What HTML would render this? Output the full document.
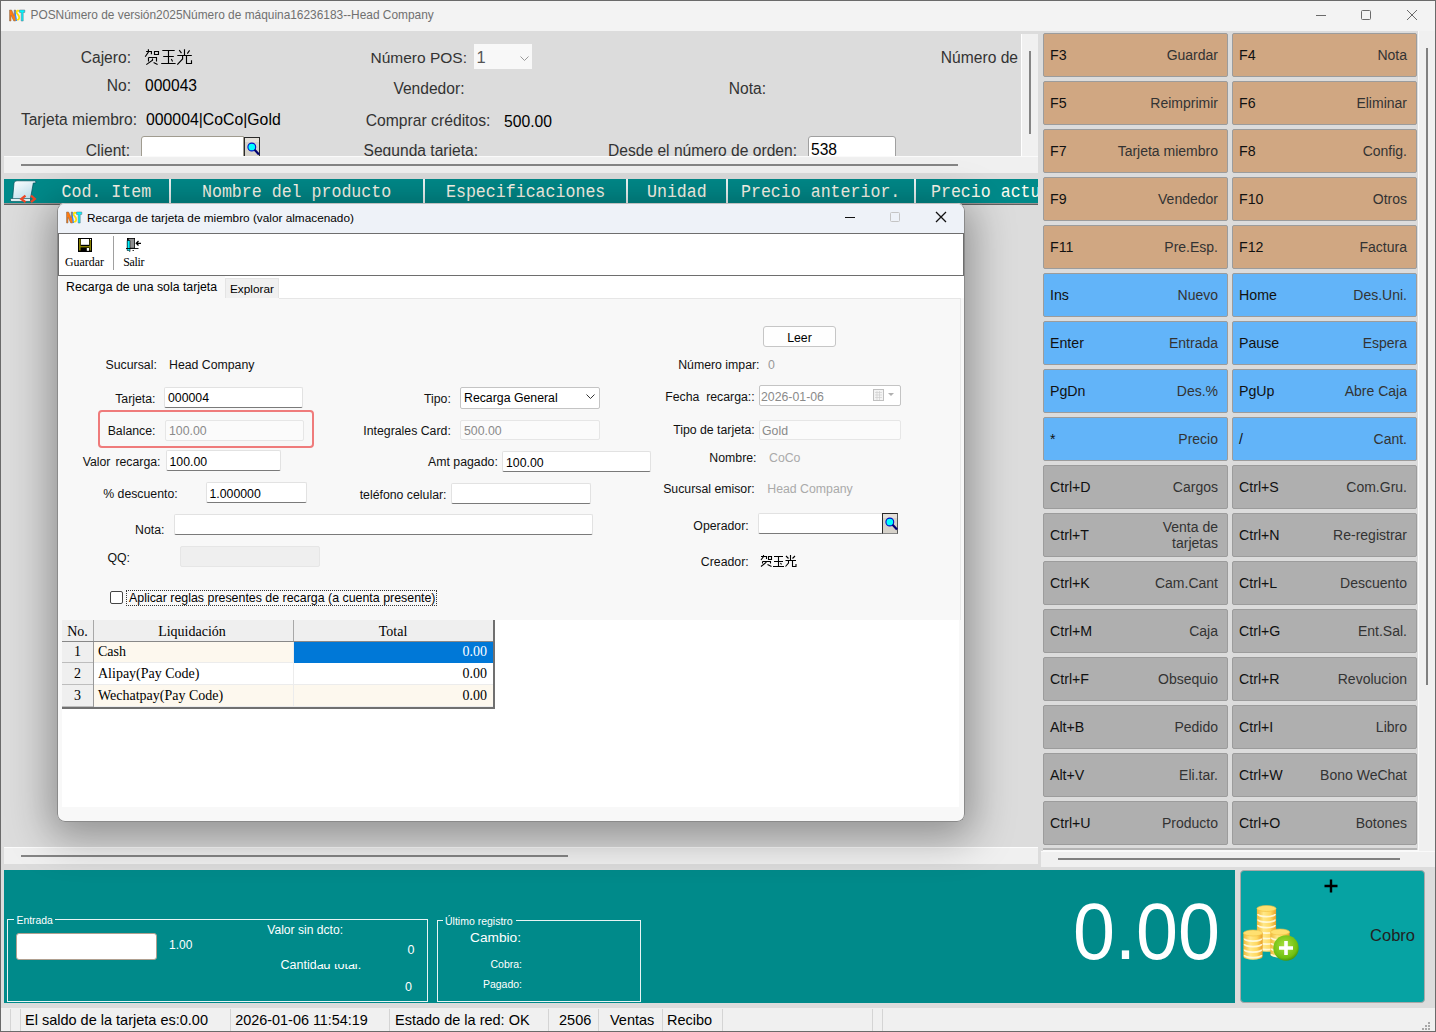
<!DOCTYPE html><html><head><meta charset="utf-8"><title>POS</title><style>
*{margin:0;padding:0;box-sizing:border-box}
html,body{width:1436px;height:1032px;overflow:hidden;background:#dcdcdc;font-family:"Liberation Sans",sans-serif}
.a{position:absolute}
.t{position:absolute;white-space:pre;line-height:1}
svg{position:absolute;overflow:visible}
</style></head><body><div class="a" style="left:0px;top:0px;width:1436px;height:31px;background:#f3f3f3"></div>
<svg style="left:9px;top:9px" width="16" height="13" viewBox="0 0 16 13"><path d="M0.5 12V1H2.6L5.2 6.5V1H6.6V12H4.7L2 6.2V12Z" fill="#ff7a10" stroke="#7a6a5a" stroke-width=".5"/><path d="M6.3 1.5C5.5 4 7 8 7.6 12" stroke="#2a88ff" stroke-width="1.2" fill="none"/><path d="M10.2 2.5C9.5 1.2 7.6 1.4 7.6 3.2C7.6 5.2 10.2 5.8 10.2 8.5C10.2 10.6 8.6 11 8 10.2" stroke="#ffe000" stroke-width="1.8" fill="none"/><path d="M10.5 1H15.8V3.4H14.2V12H12.2V3.4H10.5Z" fill="#00f8ff" stroke="#5a6a7a" stroke-width=".5"/></svg>
<div class="t" style="left:30.5px;top:10.43px;font-size:11.9px;color:#707070;font-family:'Liberation Sans', sans-serif;">POSNúmero de versión2025Número de máquina16236183--Head Company</div>
<div class="a" style="left:1316px;top:15px;width:10px;height:1px;background:#6a6a6a"></div>
<div class="a" style="left:1361px;top:10px;width:10px;height:10px;border:1px solid #6a6a6a;border-radius:1.5px"></div>
<svg style="left:1407px;top:10px" width="10" height="10"><path d="M0 0L10 10M10 0L0 10" stroke="#6a6a6a" stroke-width="1"/></svg>
<div class="t" style="right:1305px;top:49.80px;font-size:15.6px;color:#333;font-family:'Liberation Sans', sans-serif;">Cajero:</div>
<svg style="left:144px;top:48px" width="49" height="18" viewBox="0 0 49 18"><path d="M2.1 3.5H7.4V6.3M4.4 1.2V4L1.2 8.7M10.5 3.5H14.5V6.5H10.5ZM4.5 9.5V13.4M4.5 9.5H12.5V13.4M8.5 10.4V12.3L2.3 16.6M9.6 14.5L13.6 16.5M18.3 2.5H30.7M19.2 8.5H29.8M17.2 15.5H31.6M24.5 2.5V15.5M27.3 11L28.6 13.4M40.5 1.2V7.2M35.2 2.1L37.5 5.2M45.6 2.3L43.3 5.6M33.3 7.5H47.8M38.6 7.5V11L33.3 16.6M42.5 7.6V15.5H47.5V12.3" stroke="#000" stroke-width="1.15" fill="none"/></svg>
<div class="t" style="right:1305px;top:78.30px;font-size:15.6px;color:#333;font-family:'Liberation Sans', sans-serif;">No:</div>
<div class="t" style="left:145px;top:78.30px;font-size:15.6px;color:#000;font-family:'Liberation Sans', sans-serif;">000043</div>
<div class="t" style="right:1299px;top:112.30px;font-size:15.6px;color:#333;font-family:'Liberation Sans', sans-serif;">Tarjeta miembro:</div>
<div class="t" style="left:146px;top:112.13px;font-size:15.8px;color:#000;font-family:'Liberation Sans', sans-serif;">000004|CoCo|Gold</div>
<div class="t" style="right:969px;top:49.89px;font-size:15.5px;color:#333;font-family:'Liberation Sans', sans-serif;">Número POS:</div>
<div class="a" style="left:474px;top:44px;width:58px;height:25px;background:#f8f8f8"></div>
<div class="t" style="left:476.5px;top:49.04px;font-size:16.5px;color:#555;font-family:'Liberation Sans', sans-serif;">1</div>
<svg style="left:520px;top:55.5px" width="9" height="5"><path d="M0.5 0.5L4.5 4.5L8.5 0.5" stroke="#999" fill="none"/></svg>
<div class="t" style="right:971.5px;top:81.30px;font-size:15.6px;color:#333;font-family:'Liberation Sans', sans-serif;">Vendedor:</div>
<div class="t" style="right:670px;top:81.30px;font-size:15.6px;color:#333;font-family:'Liberation Sans', sans-serif;">Nota:</div>
<div class="t" style="right:418px;top:49.80px;font-size:15.6px;color:#333;font-family:'Liberation Sans', sans-serif;">Número de</div>
<div class="t" style="right:945.6px;top:113.22px;font-size:15.7px;color:#333;font-family:'Liberation Sans', sans-serif;">Comprar créditos:</div>
<div class="t" style="left:504px;top:113.72px;font-size:15.7px;color:#000;font-family:'Liberation Sans', sans-serif;">500.00</div>
<div class="t" style="right:1306px;top:142.80px;font-size:15.6px;color:#333;font-family:'Liberation Sans', sans-serif;">Client:</div>
<div class="a" style="left:141px;top:136px;width:103px;height:24px;background:#fff;border:1px solid #a09c90;border-radius:3px 0 0 0"></div>
<div class="a" style="left:244px;top:137px;width:16px;height:23px;background:linear-gradient(#e4e0da 0,#e4e0da 4px,#d6d2ca 4px);border:1px solid #2a2a2a;border-bottom:none"></div>
<svg style="left:246px;top:141px" width="14" height="15"><circle cx="5.8" cy="6" r="3.9" fill="#00ffff" stroke="#0010c8" stroke-width="1.1"/><path d="M8.6 8.8L13 13.6" stroke="#000070" stroke-width="2.2"/></svg>
<div class="t" style="right:958px;top:142.80px;font-size:15.6px;color:#333;font-family:'Liberation Sans', sans-serif;">Segunda tarieta:</div>
<div class="t" style="right:639px;top:142.80px;font-size:15.6px;color:#333;font-family:'Liberation Sans', sans-serif;">Desde el número de orden:</div>
<div class="a" style="left:808px;top:136px;width:88px;height:24px;background:#fff;border:1px solid #a0a0a0;border-radius:3px 3px 0 0"></div>
<div class="t" style="left:811px;top:141.80px;font-size:15.6px;color:#000;font-family:'Liberation Sans', sans-serif;">538</div>
<div class="a" style="left:1021px;top:34px;width:17px;height:139px;background:#f0f0f0;border-left:1px solid #fff"></div>
<div class="a" style="left:1029px;top:51px;width:2px;height:83px;background:#858585"></div>
<div class="a" style="left:4px;top:156px;width:1034px;height:17px;background:#f0f0f0;border-top:1px solid #fafafa"></div>
<div class="a" style="left:21px;top:164px;width:937px;height:2px;background:#858585"></div>
<div class="a" style="left:4px;top:179px;width:1034px;height:24px;background:#008a8a"></div>
<div class="a" style="left:4px;top:203px;width:1034px;height:1px;background:#9a9494"></div>
<div class="a" style="left:4px;top:204px;width:1034px;height:1.5px;background:#606060"></div>
<div class="a" style="left:169px;top:179px;width:2px;height:24px;background:#f0f8f8"></div>
<div class="a" style="left:423px;top:179px;width:2px;height:24px;background:#f0f8f8"></div>
<div class="a" style="left:626px;top:179px;width:2px;height:24px;background:#f0f8f8"></div>
<div class="a" style="left:725.5px;top:179px;width:2.0px;height:24px;background:#f0f8f8"></div>
<div class="a" style="left:913.5px;top:179px;width:2.0px;height:24px;background:#f0f8f8"></div>
<svg style="left:9px;top:180px" width="28" height="24" viewBox="0 0 28 24"><defs><linearGradient id="pg" x1="0" y1="0" x2=".6" y2="1"><stop offset="0" stop-color="#ffffff"/><stop offset=".6" stop-color="#d8ecf4"/><stop offset="1" stop-color="#c0e0ee"/></linearGradient></defs><path d="M5 3Q5.3 0.8 8 0.8H25.5Q27.5 1 26.8 3H24.3L21.3 19.5H3.5Z" fill="url(#pg)" stroke="#00505a" stroke-width=".7"/><path d="M1.5 18.6H21.5V21.4H2Q0.8 20 1.5 18.6Z" fill="#f4fafc" stroke="#00505a" stroke-width=".7"/><path d="M16.5 15.6L12.3 18.9L16.5 22.2M22 15.6L25.8 18.9L22 22.2" stroke="#f04828" stroke-width="2.3" fill="none"/></svg>
<div class="t" style="left:61.5px;top:184.88px;font-size:16.6px;color:#fffcf0;font-family:'Liberation Mono', monospace;transform:scaleY(1.09);transform-origin:0 77%">Cod. Item</div>
<div class="t" style="left:202px;top:184.88px;font-size:16.6px;color:#fffcf0;font-family:'Liberation Mono', monospace;transform:scaleY(1.09);transform-origin:0 77%">Nombre del producto</div>
<div class="t" style="left:446px;top:184.88px;font-size:16.6px;color:#fffcf0;font-family:'Liberation Mono', monospace;transform:scaleY(1.09);transform-origin:0 77%">Especificaciones</div>
<div class="t" style="left:647px;top:184.88px;font-size:16.6px;color:#fffcf0;font-family:'Liberation Mono', monospace;transform:scaleY(1.09);transform-origin:0 77%">Unidad</div>
<div class="t" style="left:741px;top:184.88px;font-size:16.6px;color:#fffcf0;font-family:'Liberation Mono', monospace;transform:scaleY(1.09);transform-origin:0 77%">Precio anterior.</div>
<div class="t" style="left:931px;top:184.88px;font-size:16.6px;color:#fffcf0;font-family:'Liberation Mono', monospace;transform:scaleY(1.09);transform-origin:0 77%">Precio actu</div>
<div class="a" style="left:1038px;top:179px;width:5px;height:26px;background:#dcdcdc"></div>
<div class="a" style="left:1038px;top:31px;width:398px;height:839px;background:#dcdcdc"></div>
<div class="a" style="left:1043px;top:33px;width:185px;height:44px;background:#d0a782;border:1px solid #9c9c9c;border-radius:2px"></div>
<div class="t" style="left:1050px;top:47.99px;font-size:14.2px;color:#111;font-family:'Liberation Sans', sans-serif;">F3</div>
<div class="t" style="right:218px;top:48.16px;font-size:14px;color:#333;font-family:'Liberation Sans', sans-serif;">Guardar</div>
<div class="a" style="left:1232px;top:33px;width:185px;height:44px;background:#d0a782;border:1px solid #9c9c9c;border-radius:2px"></div>
<div class="t" style="left:1239px;top:47.99px;font-size:14.2px;color:#111;font-family:'Liberation Sans', sans-serif;">F4</div>
<div class="t" style="right:29px;top:48.16px;font-size:14px;color:#333;font-family:'Liberation Sans', sans-serif;">Nota</div>
<div class="a" style="left:1043px;top:81px;width:185px;height:44px;background:#d0a782;border:1px solid #9c9c9c;border-radius:2px"></div>
<div class="t" style="left:1050px;top:95.99px;font-size:14.2px;color:#111;font-family:'Liberation Sans', sans-serif;">F5</div>
<div class="t" style="right:218px;top:96.16px;font-size:14px;color:#333;font-family:'Liberation Sans', sans-serif;">Reimprimir</div>
<div class="a" style="left:1232px;top:81px;width:185px;height:44px;background:#d0a782;border:1px solid #9c9c9c;border-radius:2px"></div>
<div class="t" style="left:1239px;top:95.99px;font-size:14.2px;color:#111;font-family:'Liberation Sans', sans-serif;">F6</div>
<div class="t" style="right:29px;top:96.16px;font-size:14px;color:#333;font-family:'Liberation Sans', sans-serif;">Eliminar</div>
<div class="a" style="left:1043px;top:129px;width:185px;height:44px;background:#d0a782;border:1px solid #9c9c9c;border-radius:2px"></div>
<div class="t" style="left:1050px;top:143.99px;font-size:14.2px;color:#111;font-family:'Liberation Sans', sans-serif;">F7</div>
<div class="t" style="right:218px;top:144.16px;font-size:14px;color:#333;font-family:'Liberation Sans', sans-serif;">Tarjeta miembro</div>
<div class="a" style="left:1232px;top:129px;width:185px;height:44px;background:#d0a782;border:1px solid #9c9c9c;border-radius:2px"></div>
<div class="t" style="left:1239px;top:143.99px;font-size:14.2px;color:#111;font-family:'Liberation Sans', sans-serif;">F8</div>
<div class="t" style="right:29px;top:144.16px;font-size:14px;color:#333;font-family:'Liberation Sans', sans-serif;">Config.</div>
<div class="a" style="left:1043px;top:177px;width:185px;height:44px;background:#d0a782;border:1px solid #9c9c9c;border-radius:2px"></div>
<div class="t" style="left:1050px;top:191.99px;font-size:14.2px;color:#111;font-family:'Liberation Sans', sans-serif;">F9</div>
<div class="t" style="right:218px;top:192.16px;font-size:14px;color:#333;font-family:'Liberation Sans', sans-serif;">Vendedor</div>
<div class="a" style="left:1232px;top:177px;width:185px;height:44px;background:#d0a782;border:1px solid #9c9c9c;border-radius:2px"></div>
<div class="t" style="left:1239px;top:191.99px;font-size:14.2px;color:#111;font-family:'Liberation Sans', sans-serif;">F10</div>
<div class="t" style="right:29px;top:192.16px;font-size:14px;color:#333;font-family:'Liberation Sans', sans-serif;">Otros</div>
<div class="a" style="left:1043px;top:225px;width:185px;height:44px;background:#d0a782;border:1px solid #9c9c9c;border-radius:2px"></div>
<div class="t" style="left:1050px;top:239.99px;font-size:14.2px;color:#111;font-family:'Liberation Sans', sans-serif;">F11</div>
<div class="t" style="right:218px;top:240.16px;font-size:14px;color:#333;font-family:'Liberation Sans', sans-serif;">Pre.Esp.</div>
<div class="a" style="left:1232px;top:225px;width:185px;height:44px;background:#d0a782;border:1px solid #9c9c9c;border-radius:2px"></div>
<div class="t" style="left:1239px;top:239.99px;font-size:14.2px;color:#111;font-family:'Liberation Sans', sans-serif;">F12</div>
<div class="t" style="right:29px;top:240.16px;font-size:14px;color:#333;font-family:'Liberation Sans', sans-serif;">Factura</div>
<div class="a" style="left:1043px;top:273px;width:185px;height:44px;background:#62b4f9;border:1px solid #9c9c9c;border-radius:2px"></div>
<div class="t" style="left:1050px;top:287.99px;font-size:14.2px;color:#111;font-family:'Liberation Sans', sans-serif;">Ins</div>
<div class="t" style="right:218px;top:288.16px;font-size:14px;color:#333;font-family:'Liberation Sans', sans-serif;">Nuevo</div>
<div class="a" style="left:1232px;top:273px;width:185px;height:44px;background:#62b4f9;border:1px solid #9c9c9c;border-radius:2px"></div>
<div class="t" style="left:1239px;top:287.99px;font-size:14.2px;color:#111;font-family:'Liberation Sans', sans-serif;">Home</div>
<div class="t" style="right:29px;top:288.16px;font-size:14px;color:#333;font-family:'Liberation Sans', sans-serif;">Des.Uni.</div>
<div class="a" style="left:1043px;top:321px;width:185px;height:44px;background:#62b4f9;border:1px solid #9c9c9c;border-radius:2px"></div>
<div class="t" style="left:1050px;top:335.99px;font-size:14.2px;color:#111;font-family:'Liberation Sans', sans-serif;">Enter</div>
<div class="t" style="right:218px;top:336.16px;font-size:14px;color:#333;font-family:'Liberation Sans', sans-serif;">Entrada</div>
<div class="a" style="left:1232px;top:321px;width:185px;height:44px;background:#62b4f9;border:1px solid #9c9c9c;border-radius:2px"></div>
<div class="t" style="left:1239px;top:335.99px;font-size:14.2px;color:#111;font-family:'Liberation Sans', sans-serif;">Pause</div>
<div class="t" style="right:29px;top:336.16px;font-size:14px;color:#333;font-family:'Liberation Sans', sans-serif;">Espera</div>
<div class="a" style="left:1043px;top:369px;width:185px;height:44px;background:#62b4f9;border:1px solid #9c9c9c;border-radius:2px"></div>
<div class="t" style="left:1050px;top:383.99px;font-size:14.2px;color:#111;font-family:'Liberation Sans', sans-serif;">PgDn</div>
<div class="t" style="right:218px;top:384.16px;font-size:14px;color:#333;font-family:'Liberation Sans', sans-serif;">Des.%</div>
<div class="a" style="left:1232px;top:369px;width:185px;height:44px;background:#62b4f9;border:1px solid #9c9c9c;border-radius:2px"></div>
<div class="t" style="left:1239px;top:383.99px;font-size:14.2px;color:#111;font-family:'Liberation Sans', sans-serif;">PgUp</div>
<div class="t" style="right:29px;top:384.16px;font-size:14px;color:#333;font-family:'Liberation Sans', sans-serif;">Abre Caja</div>
<div class="a" style="left:1043px;top:417px;width:185px;height:44px;background:#62b4f9;border:1px solid #9c9c9c;border-radius:2px"></div>
<div class="t" style="left:1050px;top:431.99px;font-size:14.2px;color:#111;font-family:'Liberation Sans', sans-serif;">*</div>
<div class="t" style="right:218px;top:432.16px;font-size:14px;color:#333;font-family:'Liberation Sans', sans-serif;">Precio</div>
<div class="a" style="left:1232px;top:417px;width:185px;height:44px;background:#62b4f9;border:1px solid #9c9c9c;border-radius:2px"></div>
<div class="t" style="left:1239px;top:431.99px;font-size:14.2px;color:#111;font-family:'Liberation Sans', sans-serif;">/</div>
<div class="t" style="right:29px;top:432.16px;font-size:14px;color:#333;font-family:'Liberation Sans', sans-serif;">Cant.</div>
<div class="a" style="left:1043px;top:465px;width:185px;height:44px;background:#afafaf;border:1px solid #9c9c9c;border-radius:2px"></div>
<div class="t" style="left:1050px;top:479.99px;font-size:14.2px;color:#111;font-family:'Liberation Sans', sans-serif;">Ctrl+D</div>
<div class="t" style="right:218px;top:480.16px;font-size:14px;color:#333;font-family:'Liberation Sans', sans-serif;">Cargos</div>
<div class="a" style="left:1232px;top:465px;width:185px;height:44px;background:#afafaf;border:1px solid #9c9c9c;border-radius:2px"></div>
<div class="t" style="left:1239px;top:479.99px;font-size:14.2px;color:#111;font-family:'Liberation Sans', sans-serif;">Ctrl+S</div>
<div class="t" style="right:29px;top:480.16px;font-size:14px;color:#333;font-family:'Liberation Sans', sans-serif;">Com.Gru.</div>
<div class="a" style="left:1043px;top:513px;width:185px;height:44px;background:#afafaf;border:1px solid #9c9c9c;border-radius:2px"></div>
<div class="t" style="left:1050px;top:527.99px;font-size:14.2px;color:#111;font-family:'Liberation Sans', sans-serif;">Ctrl+T</div>
<div class="t" style="right:218px;top:520.16px;font-size:14px;color:#333;font-family:'Liberation Sans', sans-serif;">Venta de</div>
<div class="t" style="right:218px;top:536.16px;font-size:14px;color:#333;font-family:'Liberation Sans', sans-serif;">tarjetas</div>
<div class="a" style="left:1232px;top:513px;width:185px;height:44px;background:#afafaf;border:1px solid #9c9c9c;border-radius:2px"></div>
<div class="t" style="left:1239px;top:527.99px;font-size:14.2px;color:#111;font-family:'Liberation Sans', sans-serif;">Ctrl+N</div>
<div class="t" style="right:29px;top:528.16px;font-size:14px;color:#333;font-family:'Liberation Sans', sans-serif;">Re-registrar</div>
<div class="a" style="left:1043px;top:561px;width:185px;height:44px;background:#afafaf;border:1px solid #9c9c9c;border-radius:2px"></div>
<div class="t" style="left:1050px;top:575.99px;font-size:14.2px;color:#111;font-family:'Liberation Sans', sans-serif;">Ctrl+K</div>
<div class="t" style="right:218px;top:576.16px;font-size:14px;color:#333;font-family:'Liberation Sans', sans-serif;">Cam.Cant</div>
<div class="a" style="left:1232px;top:561px;width:185px;height:44px;background:#afafaf;border:1px solid #9c9c9c;border-radius:2px"></div>
<div class="t" style="left:1239px;top:575.99px;font-size:14.2px;color:#111;font-family:'Liberation Sans', sans-serif;">Ctrl+L</div>
<div class="t" style="right:29px;top:576.16px;font-size:14px;color:#333;font-family:'Liberation Sans', sans-serif;">Descuento</div>
<div class="a" style="left:1043px;top:609px;width:185px;height:44px;background:#afafaf;border:1px solid #9c9c9c;border-radius:2px"></div>
<div class="t" style="left:1050px;top:623.99px;font-size:14.2px;color:#111;font-family:'Liberation Sans', sans-serif;">Ctrl+M</div>
<div class="t" style="right:218px;top:624.16px;font-size:14px;color:#333;font-family:'Liberation Sans', sans-serif;">Caja</div>
<div class="a" style="left:1232px;top:609px;width:185px;height:44px;background:#afafaf;border:1px solid #9c9c9c;border-radius:2px"></div>
<div class="t" style="left:1239px;top:623.99px;font-size:14.2px;color:#111;font-family:'Liberation Sans', sans-serif;">Ctrl+G</div>
<div class="t" style="right:29px;top:624.16px;font-size:14px;color:#333;font-family:'Liberation Sans', sans-serif;">Ent.Sal.</div>
<div class="a" style="left:1043px;top:657px;width:185px;height:44px;background:#afafaf;border:1px solid #9c9c9c;border-radius:2px"></div>
<div class="t" style="left:1050px;top:671.99px;font-size:14.2px;color:#111;font-family:'Liberation Sans', sans-serif;">Ctrl+F</div>
<div class="t" style="right:218px;top:672.16px;font-size:14px;color:#333;font-family:'Liberation Sans', sans-serif;">Obsequio</div>
<div class="a" style="left:1232px;top:657px;width:185px;height:44px;background:#afafaf;border:1px solid #9c9c9c;border-radius:2px"></div>
<div class="t" style="left:1239px;top:671.99px;font-size:14.2px;color:#111;font-family:'Liberation Sans', sans-serif;">Ctrl+R</div>
<div class="t" style="right:29px;top:672.16px;font-size:14px;color:#333;font-family:'Liberation Sans', sans-serif;">Revolucion</div>
<div class="a" style="left:1043px;top:705px;width:185px;height:44px;background:#afafaf;border:1px solid #9c9c9c;border-radius:2px"></div>
<div class="t" style="left:1050px;top:719.99px;font-size:14.2px;color:#111;font-family:'Liberation Sans', sans-serif;">Alt+B</div>
<div class="t" style="right:218px;top:720.16px;font-size:14px;color:#333;font-family:'Liberation Sans', sans-serif;">Pedido</div>
<div class="a" style="left:1232px;top:705px;width:185px;height:44px;background:#afafaf;border:1px solid #9c9c9c;border-radius:2px"></div>
<div class="t" style="left:1239px;top:719.99px;font-size:14.2px;color:#111;font-family:'Liberation Sans', sans-serif;">Ctrl+I</div>
<div class="t" style="right:29px;top:720.16px;font-size:14px;color:#333;font-family:'Liberation Sans', sans-serif;">Libro</div>
<div class="a" style="left:1043px;top:753px;width:185px;height:44px;background:#afafaf;border:1px solid #9c9c9c;border-radius:2px"></div>
<div class="t" style="left:1050px;top:767.99px;font-size:14.2px;color:#111;font-family:'Liberation Sans', sans-serif;">Alt+V</div>
<div class="t" style="right:218px;top:768.16px;font-size:14px;color:#333;font-family:'Liberation Sans', sans-serif;">Eli.tar.</div>
<div class="a" style="left:1232px;top:753px;width:185px;height:44px;background:#afafaf;border:1px solid #9c9c9c;border-radius:2px"></div>
<div class="t" style="left:1239px;top:767.99px;font-size:14.2px;color:#111;font-family:'Liberation Sans', sans-serif;">Ctrl+W</div>
<div class="t" style="right:29px;top:768.16px;font-size:14px;color:#333;font-family:'Liberation Sans', sans-serif;">Bono WeChat</div>
<div class="a" style="left:1043px;top:801px;width:185px;height:44px;background:#afafaf;border:1px solid #9c9c9c;border-radius:2px"></div>
<div class="t" style="left:1050px;top:815.99px;font-size:14.2px;color:#111;font-family:'Liberation Sans', sans-serif;">Ctrl+U</div>
<div class="t" style="right:218px;top:816.16px;font-size:14px;color:#333;font-family:'Liberation Sans', sans-serif;">Producto</div>
<div class="a" style="left:1232px;top:801px;width:185px;height:44px;background:#afafaf;border:1px solid #9c9c9c;border-radius:2px"></div>
<div class="t" style="left:1239px;top:815.99px;font-size:14.2px;color:#111;font-family:'Liberation Sans', sans-serif;">Ctrl+O</div>
<div class="t" style="right:29px;top:816.16px;font-size:14px;color:#333;font-family:'Liberation Sans', sans-serif;">Botones</div>
<div class="a" style="left:1418px;top:31px;width:17px;height:820px;background:#f0f0f0;border-left:1px solid #fafafa"></div>
<div class="a" style="left:1426px;top:48px;width:2px;height:637px;background:#808080"></div>
<div class="a" style="left:1043px;top:848px;width:374px;height:1.5px;background:#b4b4b4"></div>
<div class="a" style="left:1043px;top:849.5px;width:375px;height:1.5px;background:#fafafa"></div>
<div class="a" style="left:1041px;top:851px;width:394px;height:16px;background:#f0f0f0;border-top:1px solid #fafafa"></div>
<div class="a" style="left:1058px;top:858px;width:342px;height:2px;background:#808080"></div>
<div class="a" style="left:4px;top:205px;width:1034px;height:642px;background:#dcdcdc"></div>
<div class="a" style="left:4px;top:847px;width:1034px;height:17px;background:#f0f0f0;border-top:1px solid #fcfcfc"></div>
<div class="a" style="left:21px;top:855px;width:547px;height:2px;background:#858585"></div>
<div class="a" style="left:0px;top:864px;width:1038px;height:144px;background:#dcdcdc"></div>
<div class="a" style="left:1038px;top:867px;width:398px;height:141px;background:#dcdcdc"></div>
<div class="a" style="left:4px;top:870px;width:1231px;height:133px;background:#008a8a"></div>
<div class="a" style="left:7px;top:919px;width:421px;height:83px;border:1px solid #e8f4f4"></div>
<div class="a" style="left:14px;top:912px;width:41px;height:14px;background:#008a8a"></div>
<div class="t" style="left:16.5px;top:915.70px;font-size:10.4px;color:#fff;font-family:'Liberation Sans', sans-serif;">Entrada</div>
<div class="a" style="left:16px;top:933px;width:141px;height:27px;background:#fff;border:1px solid #b0a090;border-radius:3px"></div>
<div class="t" style="left:169px;top:938.85px;font-size:12px;color:#fff;font-family:'Liberation Sans', sans-serif;">1.00</div>
<div class="t" style="right:1093px;top:924.26px;font-size:12.1px;color:#fff;font-family:'Liberation Sans', sans-serif;">Valor sin dcto:</div>
<div class="t" style="right:1021.5px;top:944.42px;font-size:12.5px;color:#fff;font-family:'Liberation Sans', sans-serif;">0</div>
<div class="t" style="left:280.5px;top:959.12px;font-size:12.5px;color:#fff;font-family:'Liberation Sans', sans-serif;">Cantidad total:</div>
<div class="a" style="left:316px;top:948px;width:56px;height:15.799999999999955px;background:#008a8a"></div>
<div class="t" style="right:1024px;top:980.92px;font-size:12.5px;color:#fff;font-family:'Liberation Sans', sans-serif;">0</div>
<div class="a" style="left:437px;top:920px;width:204px;height:82px;border:1px solid #e8f4f4"></div>
<div class="a" style="left:443px;top:913px;width:73px;height:14px;background:#008a8a"></div>
<div class="t" style="left:445px;top:916.12px;font-size:10.5px;color:#fff;font-family:'Liberation Sans', sans-serif;">Último registro</div>
<div class="t" style="right:915px;top:931.41px;font-size:13.7px;color:#fff;font-family:'Liberation Sans', sans-serif;">Cambio:</div>
<div class="t" style="right:914px;top:958.62px;font-size:10.5px;color:#fff;font-family:'Liberation Sans', sans-serif;">Cobra:</div>
<div class="t" style="right:914px;top:978.62px;font-size:10.5px;color:#fff;font-family:'Liberation Sans', sans-serif;">Pagado:</div>
<div class="t" style="right:216px;top:896.43px;font-size:75.5px;color:#fff;font-family:'Liberation Sans', sans-serif;transform:scaleY(1.045);transform-origin:0 85%">0.00</div>
<div class="a" style="left:1240px;top:870px;width:185px;height:133px;background:#06a3a3;border:1px solid #a8a8a8;border-radius:4px"></div>
<svg style="left:1324px;top:879px" width="14" height="14"><path d="M7 0.5V13.5M0.5 7H13.5" stroke="#000" stroke-width="2.4"/></svg>
<div class="t" style="right:21px;top:927.04px;font-size:16.5px;color:#222;font-family:'Liberation Sans', sans-serif;">Cobro</div>
<svg style="left:1242px;top:904px" width="60" height="62" viewBox="0 0 60 62"><defs><linearGradient id="cg" x1="0" x2="1"><stop offset="0" stop-color="#f0b838"/><stop offset=".35" stop-color="#ffe888"/><stop offset=".7" stop-color="#ffd860"/><stop offset="1" stop-color="#e8a028"/></linearGradient><radialGradient id="gg" cx=".45" cy=".4" r=".65"><stop offset="0" stop-color="#a8e040"/><stop offset=".75" stop-color="#70c010"/><stop offset="1" stop-color="#3a8a08"/></radialGradient></defs><path d="M14.9 4.5V44.7A9.6 3 0 0 0 34.1 44.7V4.5Z" fill="url(#cg)"/><path d="M15.9 10.0A8.6 2.6 0 0 0 33.1 10.0" stroke="#fffbe0" stroke-width="1.6" fill="none" opacity=".9"/><path d="M15.9 15.5A8.6 2.6 0 0 0 33.1 15.5" stroke="#fffbe0" stroke-width="1.6" fill="none" opacity=".9"/><path d="M15.9 21.0A8.6 2.6 0 0 0 33.1 21.0" stroke="#fffbe0" stroke-width="1.6" fill="none" opacity=".9"/><path d="M15.9 26.5A8.6 2.6 0 0 0 33.1 26.5" stroke="#fffbe0" stroke-width="1.6" fill="none" opacity=".9"/><path d="M15.9 32.0A8.6 2.6 0 0 0 33.1 32.0" stroke="#fffbe0" stroke-width="1.6" fill="none" opacity=".9"/><path d="M15.9 37.5A8.6 2.6 0 0 0 33.1 37.5" stroke="#fffbe0" stroke-width="1.6" fill="none" opacity=".9"/><path d="M15.9 43.0A8.6 2.6 0 0 0 33.1 43.0" stroke="#fffbe0" stroke-width="1.6" fill="none" opacity=".9"/><ellipse cx="24.5" cy="4.5" rx="9.6" ry="3" fill="#ffe070" stroke="#f0c040" stroke-width=".6"/><path d="M28.4 28V50.4A9.6 3 0 0 0 47.6 50.4V28Z" fill="url(#cg)"/><path d="M29.4 33.5A8.6 2.6 0 0 0 46.6 33.5" stroke="#fffbe0" stroke-width="1.6" fill="none" opacity=".9"/><path d="M29.4 39.0A8.6 2.6 0 0 0 46.6 39.0" stroke="#fffbe0" stroke-width="1.6" fill="none" opacity=".9"/><path d="M29.4 44.5A8.6 2.6 0 0 0 46.6 44.5" stroke="#fffbe0" stroke-width="1.6" fill="none" opacity=".9"/><path d="M29.4 50.0A8.6 2.6 0 0 0 46.6 50.0" stroke="#fffbe0" stroke-width="1.6" fill="none" opacity=".9"/><ellipse cx="38" cy="28" rx="9.6" ry="3" fill="#ffe070" stroke="#f0c040" stroke-width=".6"/><path d="M1.4000000000000004 29V52.7A9.6 3 0 0 0 20.6 52.7V29Z" fill="url(#cg)"/><path d="M2.4000000000000004 34.5A8.6 2.6 0 0 0 19.6 34.5" stroke="#fffbe0" stroke-width="1.6" fill="none" opacity=".9"/><path d="M2.4000000000000004 40.0A8.6 2.6 0 0 0 19.6 40.0" stroke="#fffbe0" stroke-width="1.6" fill="none" opacity=".9"/><path d="M2.4000000000000004 45.5A8.6 2.6 0 0 0 19.6 45.5" stroke="#fffbe0" stroke-width="1.6" fill="none" opacity=".9"/><path d="M2.4000000000000004 51.0A8.6 2.6 0 0 0 19.6 51.0" stroke="#fffbe0" stroke-width="1.6" fill="none" opacity=".9"/><ellipse cx="11" cy="29" rx="9.6" ry="3" fill="#ffe070" stroke="#f0c040" stroke-width=".6"/><circle cx="44" cy="44" r="12.7" fill="url(#gg)"/><path d="M44 37V51M37 44H51" stroke="#fff" stroke-width="3.6"/></svg>
<div class="a" style="left:0px;top:1008px;width:1436px;height:24px;background:#f0f0f0"></div>
<div class="a" style="left:10px;top:1009px;width:1px;height:22px;background:#d4d4d4"></div>
<div class="a" style="left:20px;top:1009px;width:1px;height:22px;background:#d4d4d4"></div>
<div class="a" style="left:230px;top:1009px;width:1px;height:22px;background:#d4d4d4"></div>
<div class="a" style="left:389px;top:1009px;width:1px;height:22px;background:#d4d4d4"></div>
<div class="a" style="left:548px;top:1009px;width:1px;height:22px;background:#d4d4d4"></div>
<div class="a" style="left:598px;top:1009px;width:1px;height:22px;background:#d4d4d4"></div>
<div class="a" style="left:662px;top:1009px;width:1px;height:22px;background:#d4d4d4"></div>
<div class="a" style="left:722px;top:1009px;width:1px;height:22px;background:#d4d4d4"></div>
<div class="a" style="left:872px;top:1009px;width:1px;height:22px;background:#d4d4d4"></div>
<div class="a" style="left:882px;top:1009px;width:1px;height:22px;background:#d4d4d4"></div>
<div class="t" style="left:25px;top:1012.73px;font-size:14.5px;color:#000;font-family:'Liberation Sans', sans-serif;">El saldo de la tarjeta es:0.00</div>
<div class="t" style="left:235.3px;top:1012.82px;font-size:14.4px;color:#000;font-family:'Liberation Sans', sans-serif;">2026-01-06 11:54:19</div>
<div class="t" style="left:395px;top:1012.73px;font-size:14.5px;color:#000;font-family:'Liberation Sans', sans-serif;">Estado de la red: OK</div>
<div class="t" style="left:559px;top:1012.73px;font-size:14.5px;color:#000;font-family:'Liberation Sans', sans-serif;">2506</div>
<div class="t" style="left:610px;top:1012.73px;font-size:14.5px;color:#000;font-family:'Liberation Sans', sans-serif;">Ventas</div>
<div class="t" style="left:667px;top:1012.73px;font-size:14.5px;color:#000;font-family:'Liberation Sans', sans-serif;">Recibo</div>
<div class="a" style="left:1428px;top:1022px;width:2px;height:2px;background:#a8a8a8"></div>
<div class="a" style="left:1425px;top:1025px;width:2px;height:2px;background:#a8a8a8"></div>
<div class="a" style="left:1428px;top:1025px;width:2px;height:2px;background:#a8a8a8"></div>
<div class="a" style="left:1422px;top:1028px;width:2px;height:2px;background:#a8a8a8"></div>
<div class="a" style="left:1425px;top:1028px;width:2px;height:2px;background:#a8a8a8"></div>
<div class="a" style="left:1428px;top:1028px;width:2px;height:2px;background:#a8a8a8"></div>
<div class="a" style="left:0px;top:0px;width:1436px;height:1032px;border:1px solid #6a6a6a;pointer-events:none"></div>
<div class="a" style="left:57px;top:203px;width:908px;height:619px;border-radius:8px;box-shadow:0 8px 40px 8px rgba(0,0,0,.34);background:#f8f8f8"></div>
<div class="a" style="left:57px;top:203px;width:908px;height:619px;background:#f8f8f8;border:1px solid #8a8a8a;border-top-color:#c0c0c0;border-radius:8px;overflow:hidden"></div>
<div class="a" style="left:58px;top:204px;width:906px;height:29px;background:#eef2f8;border-radius:7px 7px 0 0"></div>
<svg style="left:66px;top:211px" width="16" height="13" viewBox="0 0 16 13"><path d="M0.5 12V1H2.6L5.2 6.5V1H6.6V12H4.7L2 6.2V12Z" fill="#ff7a10" stroke="#7a6a5a" stroke-width=".5"/><path d="M6.3 1.5C5.5 4 7 8 7.6 12" stroke="#2a88ff" stroke-width="1.2" fill="none"/><path d="M10.2 2.5C9.5 1.2 7.6 1.4 7.6 3.2C7.6 5.2 10.2 5.8 10.2 8.5C10.2 10.6 8.6 11 8 10.2" stroke="#ffe000" stroke-width="1.8" fill="none"/><path d="M10.5 1H15.8V3.4H14.2V12H12.2V3.4H10.5Z" fill="#00f8ff" stroke="#5a6a7a" stroke-width=".5"/></svg>
<div class="t" style="left:87px;top:212.52px;font-size:11.8px;color:#000;font-family:'Liberation Sans', sans-serif;">Recarga de tarjeta de miembro (valor almacenado)</div>
<div class="a" style="left:845px;top:217px;width:10px;height:1.1999999999999886px;background:#111"></div>
<div class="a" style="left:890px;top:212px;width:10px;height:10px;border:1px solid #c4c4c4;border-radius:1.5px"></div>
<svg style="left:936px;top:212px" width="10" height="10"><path d="M0 0L10 10M10 0L0 10" stroke="#111" stroke-width="1.3"/></svg>
<div class="a" style="left:58px;top:233px;width:906px;height:43px;background:#fff;border:1px solid #6e6e6e;border-width:1.3px 1px 1.3px 1px"></div>
<svg style="left:78px;top:238px" width="14" height="14" viewBox="0 0 14 14"><rect x="0" y="0" width="14" height="14" fill="#000"/><rect x="1" y="1" width="1.6" height="11.5" fill="#888000"/><rect x="11.6" y="1.5" width="1.4" height="11" fill="#888000"/><rect x="3" y="1" width="8" height="5.8" fill="#fff"/><rect x="2" y="8" width="10.5" height="1.4" fill="#888000"/><rect x="8.8" y="10" width="2.2" height="2.8" fill="#fff"/><rect x="12" y="1" width="1" height="1" fill="#fff"/></svg>
<div class="t" style="left:65px;top:256.83px;font-size:11.9px;color:#000;font-family:'Liberation Serif', serif;">Guardar</div>
<div class="a" style="left:113px;top:236px;width:1.2999999999999972px;height:33.5px;background:#a0a0a0"></div>
<svg style="left:126px;top:238px" width="16" height="15" viewBox="0 0 16 15"><rect x="1" y="0" width="8" height="10.5" fill="#000"/><rect x="2.7" y="0.8" width="5.6" height="9" fill="#909090"/><path d="M1.2 2.5H4V13.5L2.5 12.5H1.2Z" fill="#00f0ff" stroke="#000" stroke-width=".6"/><path d="M0 10.5H12.5" stroke="#000" stroke-width=".9"/><path d="M6.5 12.5H8" stroke="#000" stroke-width=".8"/><path d="M10.5 5.3H15M12.5 3L10.3 5.3L12.5 7.5" stroke="#000" stroke-width="1.3" fill="none"/></svg>
<div class="t" style="left:123.3px;top:256.83px;font-size:11.9px;color:#000;font-family:'Liberation Serif', serif;letter-spacing:-0.3px">Salir</div>
<div class="a" style="left:58px;top:276px;width:906px;height:22px;background:#ffffff"></div>
<div class="a" style="left:58px;top:276px;width:167px;height:22px;background:#f8f8f8"></div>
<div class="t" style="left:66px;top:280.59px;font-size:12.3px;color:#000;font-family:'Liberation Sans', sans-serif;">Recarga de una sola tarjeta</div>
<div class="a" style="left:225px;top:278px;width:54px;height:21px;background:#f0f0f0;border:1px solid #e4e4e4;border-bottom:none"></div>
<div class="t" style="left:230px;top:283.52px;font-size:11.8px;color:#000;font-family:'Liberation Sans', sans-serif;">Explorar</div>
<div class="a" style="left:60px;top:298px;width:900px;height:322px;background:#f8f8f8"></div>
<div class="a" style="left:279px;top:298px;width:682px;height:1px;background:#e6e6e6"></div>
<div class="a" style="left:960px;top:298px;width:1px;height:322px;background:#e8e8e8"></div>
<div class="a" style="left:763px;top:326px;width:73px;height:21px;background:#fefefe;border:1px solid #c6c6c6;border-radius:3px"></div>
<div class="t" style="left:799.5px;top:331.79px;font-size:12.3px;color:#000;font-family:'Liberation Sans', sans-serif;transform:translateX(-50%)">Leer</div>
<div class="t" style="right:1279.2px;top:358.89px;font-size:12.3px;color:#111;font-family:'Liberation Sans', sans-serif;">Sucursal:</div>
<div class="t" style="left:169px;top:358.89px;font-size:12.3px;color:#111;font-family:'Liberation Sans', sans-serif;">Head Company</div>
<div class="t" style="right:1280.5px;top:393.09px;font-size:12.3px;color:#111;font-family:'Liberation Sans', sans-serif;">Tarjeta:</div>
<div class="a" style="left:164px;top:387px;width:139px;height:21px;background:#fff;border:1px solid #e2e2e2;border-bottom:1px solid #7a7a7a;border-radius:2px"></div>
<div class="t" style="left:168px;top:392.09px;font-size:12.3px;color:#000;font-family:'Liberation Sans', sans-serif;">000004</div>
<div class="a" style="left:98px;top:410px;width:216px;height:38px;border:2px solid #ef7b7b;border-radius:4px"></div>
<div class="t" style="right:1280.5px;top:425.39px;font-size:12.3px;color:#111;font-family:'Liberation Sans', sans-serif;">Balance:</div>
<div class="a" style="left:165px;top:420px;width:139px;height:21px;background:#fbfbfb;border:1px solid #e6e6e6;border-radius:2px"></div>
<div class="t" style="left:169px;top:425.09px;font-size:12.3px;color:#8a8a8a;font-family:'Liberation Sans', sans-serif;">100.00</div>
<div class="t" style="right:1275.5px;top:456.09px;font-size:12.3px;color:#111;font-family:'Liberation Sans', sans-serif;word-spacing:1.5px">Valor recarga:</div>
<div class="a" style="left:166px;top:450px;width:115px;height:21px;background:#fff;border:1px solid #e2e2e2;border-bottom:1px solid #7a7a7a;border-radius:2px"></div>
<div class="t" style="left:169.5px;top:455.59px;font-size:12.3px;color:#000;font-family:'Liberation Sans', sans-serif;">100.00</div>
<div class="t" style="right:1258.3px;top:488.39px;font-size:12.3px;color:#111;font-family:'Liberation Sans', sans-serif;">% descuento:</div>
<div class="a" style="left:206px;top:482px;width:101px;height:21px;background:#fff;border:1px solid #e2e2e2;border-bottom:1px solid #7a7a7a;border-radius:2px"></div>
<div class="t" style="left:209.5px;top:487.59px;font-size:12.3px;color:#000;font-family:'Liberation Sans', sans-serif;">1.000000</div>
<div class="t" style="right:1271.5px;top:524.19px;font-size:12.3px;color:#111;font-family:'Liberation Sans', sans-serif;">Nota:</div>
<div class="a" style="left:174px;top:514px;width:419px;height:21px;background:#fff;border:1px solid #e2e2e2;border-bottom:1px solid #7a7a7a;border-radius:2px"></div>
<div class="t" style="right:1306px;top:552.39px;font-size:12.3px;color:#111;font-family:'Liberation Sans', sans-serif;">QQ:</div>
<div class="a" style="left:180px;top:546px;width:140px;height:21px;background:#efefef;border:1px solid #e6e6e6;border-radius:2px"></div>
<div class="a" style="left:110px;top:591px;width:13px;height:13px;background:#fff;border:1px solid #444;border-radius:2px"></div>
<div class="a" style="left:126px;top:590px;width:311px;height:16px;border:1px dotted #333"></div>
<div class="t" style="left:129px;top:592.01px;font-size:12.4px;color:#000;font-family:'Liberation Sans', sans-serif;">Aplicar reglas presentes de recarga (a cuenta presente)</div>
<div class="t" style="right:985.2px;top:393.29px;font-size:12.3px;color:#111;font-family:'Liberation Sans', sans-serif;">Tipo:</div>
<div class="a" style="left:460px;top:387px;width:140px;height:22px;background:#fff;border:1px solid #c4c4c4;border-radius:2px"></div>
<div class="t" style="left:464px;top:392.39px;font-size:12.3px;color:#000;font-family:'Liberation Sans', sans-serif;">Recarga General</div>
<svg style="left:586px;top:394px" width="9" height="6"><path d="M0.5 0.5L4.5 4.5L8.5 0.5" stroke="#333" fill="none" stroke-width="1"/></svg>
<div class="t" style="right:985.2px;top:425.19px;font-size:12.3px;color:#111;font-family:'Liberation Sans', sans-serif;">Integrales Card:</div>
<div class="a" style="left:460px;top:420px;width:140px;height:20px;background:#fbfbfb;border:1px solid #e6e6e6;border-radius:2px"></div>
<div class="t" style="left:464px;top:424.59px;font-size:12.3px;color:#8a8a8a;font-family:'Liberation Sans', sans-serif;">500.00</div>
<div class="t" style="right:938.2px;top:456.39px;font-size:12.3px;color:#111;font-family:'Liberation Sans', sans-serif;">Amt pagado:</div>
<div class="a" style="left:502px;top:451px;width:149px;height:21px;background:#fff;border:1px solid #e2e2e2;border-bottom:1px solid #7a7a7a;border-radius:2px"></div>
<div class="t" style="left:506px;top:456.59px;font-size:12.3px;color:#000;font-family:'Liberation Sans', sans-serif;">100.00</div>
<div class="t" style="right:989.5px;top:488.69px;font-size:12.3px;color:#111;font-family:'Liberation Sans', sans-serif;">teléfono celular:</div>
<div class="a" style="left:451px;top:483px;width:140px;height:21px;background:#fff;border:1px solid #e2e2e2;border-bottom:1px solid #7a7a7a;border-radius:2px"></div>
<div class="t" style="right:676.5px;top:359.49px;font-size:12.3px;color:#111;font-family:'Liberation Sans', sans-serif;">Número impar:</div>
<div class="t" style="left:768px;top:359.49px;font-size:12.3px;color:#999;font-family:'Liberation Sans', sans-serif;">0</div>
<div class="t" style="right:681.3px;top:391.19px;font-size:12.3px;color:#111;font-family:'Liberation Sans', sans-serif;">Fecha  recarga::</div>
<div class="a" style="left:759px;top:385px;width:142px;height:21px;background:#fff;border:1px solid #c4c4c4;border-radius:2px"></div>
<div class="t" style="left:761px;top:390.59px;font-size:12.3px;color:#8a8a8a;font-family:'Liberation Sans', sans-serif;">2026-01-06</div>
<svg style="left:873px;top:389px" width="22" height="13" viewBox="0 0 22 13"><rect x="0.5" y="0.5" width="10" height="11" fill="#f4f4f4" stroke="#c0c0c0"/><path d="M2 3.5H9M2 6H9M2 8.5H9M4 2V11M6.5 2V11" stroke="#d0d0d0" stroke-width=".7"/><path d="M15 4H21L18 7Z" fill="#b0b0b0"/></svg>
<div class="t" style="right:681.3px;top:424.29px;font-size:12.3px;color:#111;font-family:'Liberation Sans', sans-serif;">Tipo de tarjeta:</div>
<div class="a" style="left:759px;top:420px;width:142px;height:20px;background:#fbfbfb;border:1px solid #e6e6e6;border-radius:2px"></div>
<div class="t" style="left:762px;top:424.59px;font-size:12.3px;color:#8a8a8a;font-family:'Liberation Sans', sans-serif;">Gold</div>
<div class="t" style="right:679.5px;top:452.19px;font-size:12.3px;color:#111;font-family:'Liberation Sans', sans-serif;">Nombre:</div>
<div class="t" style="left:769px;top:452.19px;font-size:12.3px;color:#aaa;font-family:'Liberation Sans', sans-serif;">CoCo</div>
<div class="t" style="right:681.3px;top:482.89px;font-size:12.3px;color:#111;font-family:'Liberation Sans', sans-serif;">Sucursal emisor:</div>
<div class="t" style="left:767.3px;top:482.89px;font-size:12.3px;color:#aaa;font-family:'Liberation Sans', sans-serif;">Head Company</div>
<div class="t" style="right:687.3px;top:519.79px;font-size:12.3px;color:#111;font-family:'Liberation Sans', sans-serif;">Operador:</div>
<div class="a" style="left:758px;top:513px;width:125px;height:21px;background:#fff;border:1px solid #e2e2e2;border-bottom:1px solid #7a7a7a;border-radius:2px"></div>
<div class="a" style="left:882px;top:513px;width:16px;height:21px;background:linear-gradient(#e4e0da 0,#e4e0da 4px,#d6d2ca 4px);border:1px solid #2a2a2a;border-right-color:#555;border-bottom-color:#888"></div>
<svg style="left:884px;top:516px" width="14" height="15"><circle cx="5.8" cy="6" r="3.9" fill="#00ffff" stroke="#0010c8" stroke-width="1.1"/><path d="M8.6 8.8L13 13.6" stroke="#000070" stroke-width="2.2"/></svg>
<div class="t" style="right:687.3px;top:555.59px;font-size:12.3px;color:#111;font-family:'Liberation Sans', sans-serif;">Creador:</div>
<svg style="left:756px;top:550px" width="44" height="20" viewBox="0 0 44 20"><path d="M5 6.5H10.5V9M7.5 5V6.5L5 10M12.5 6.5H15.5V9.5H12.5ZM6.5 11.5V13.5M6.5 11.5H14.5V13.5M10 12V12.5L5 16.5M11.5 14.5L15.5 16.5M18 6.5H27M18 11.5H27M17 16.5H28M22.5 6.5V16.5M24.5 13L25.5 14.5M34.5 5V10.5M30 6L32.5 8.5M39 6L36.5 8.5M29.5 10.5H40M32.5 10.5V13L29.5 16.5M36.5 10.5V16.5H40V14" stroke="#000" stroke-width="1.1" fill="none"/></svg>
<div class="a" style="left:62px;top:620px;width:897px;height:187px;background:#fff"></div>
<div class="a" style="left:62px;top:620px;width:432px;height:21px;background:#efefef"></div>
<div class="a" style="left:93px;top:620px;width:1px;height:21px;background:#a8a8a8"></div>
<div class="a" style="left:293px;top:620px;width:1px;height:21px;background:#a8a8a8"></div>
<div class="a" style="left:62px;top:641px;width:432px;height:1px;background:#888"></div>
<div class="a" style="left:62px;top:642px;width:31px;height:21px;background:#efefef;border-bottom:1px solid #bdbdbd"></div>
<div class="a" style="left:93px;top:642px;width:1px;height:21px;background:#999"></div>
<div class="a" style="left:94px;top:642px;width:399px;height:21px;background:#fdf8ee;border-bottom:1px solid #ececec"></div>
<div class="a" style="left:293px;top:642px;width:1px;height:21px;background:#ececec"></div>
<div class="a" style="left:62px;top:663px;width:31px;height:22px;background:#efefef;border-bottom:1px solid #bdbdbd"></div>
<div class="a" style="left:93px;top:663px;width:1px;height:22px;background:#999"></div>
<div class="a" style="left:94px;top:663px;width:399px;height:22px;background:#fff;border-bottom:1px solid #ececec"></div>
<div class="a" style="left:293px;top:663px;width:1px;height:22px;background:#ececec"></div>
<div class="a" style="left:62px;top:685px;width:31px;height:22px;background:#efefef;border-bottom:1px solid #bdbdbd"></div>
<div class="a" style="left:93px;top:685px;width:1px;height:22px;background:#999"></div>
<div class="a" style="left:94px;top:685px;width:399px;height:22px;background:#fdf8ee;border-bottom:1px solid #ececec"></div>
<div class="a" style="left:293px;top:685px;width:1px;height:22px;background:#ececec"></div>
<div class="a" style="left:294px;top:642px;width:199px;height:21px;background:#0078d7"></div>
<div class="a" style="left:62px;top:707px;width:432px;height:2px;background:#707070"></div>
<div class="a" style="left:493px;top:620px;width:2px;height:89px;background:#707070"></div>
<div class="t" style="left:77.5px;top:625.27px;font-size:14px;color:#000;font-family:'Liberation Serif', serif;transform:translateX(-50%)">No.</div>
<div class="t" style="left:192px;top:625.27px;font-size:14px;color:#000;font-family:'Liberation Serif', serif;transform:translateX(-50%)">Liquidación</div>
<div class="t" style="left:393px;top:625.27px;font-size:14px;color:#000;font-family:'Liberation Serif', serif;transform:translateX(-50%)">Total</div>
<div class="t" style="left:77.5px;top:645.48px;font-size:14px;color:#000;font-family:'Liberation Serif', serif;transform:translateX(-50%)">1</div>
<div class="t" style="left:98px;top:645.48px;font-size:14px;color:#000;font-family:'Liberation Serif', serif;">Cash</div>
<div class="t" style="right:949px;top:645.48px;font-size:14px;color:#fff;font-family:'Liberation Serif', serif;">0.00</div>
<div class="t" style="left:77.5px;top:667.48px;font-size:14px;color:#000;font-family:'Liberation Serif', serif;transform:translateX(-50%)">2</div>
<div class="t" style="left:98px;top:667.48px;font-size:14px;color:#000;font-family:'Liberation Serif', serif;">Alipay(Pay Code)</div>
<div class="t" style="right:949px;top:667.48px;font-size:14px;color:#000;font-family:'Liberation Serif', serif;">0.00</div>
<div class="t" style="left:77.5px;top:689.48px;font-size:14px;color:#000;font-family:'Liberation Serif', serif;transform:translateX(-50%)">3</div>
<div class="t" style="left:98px;top:689.48px;font-size:14px;color:#000;font-family:'Liberation Serif', serif;">Wechatpay(Pay Code)</div>
<div class="t" style="right:949px;top:689.48px;font-size:14px;color:#000;font-family:'Liberation Serif', serif;">0.00</div></body></html>
